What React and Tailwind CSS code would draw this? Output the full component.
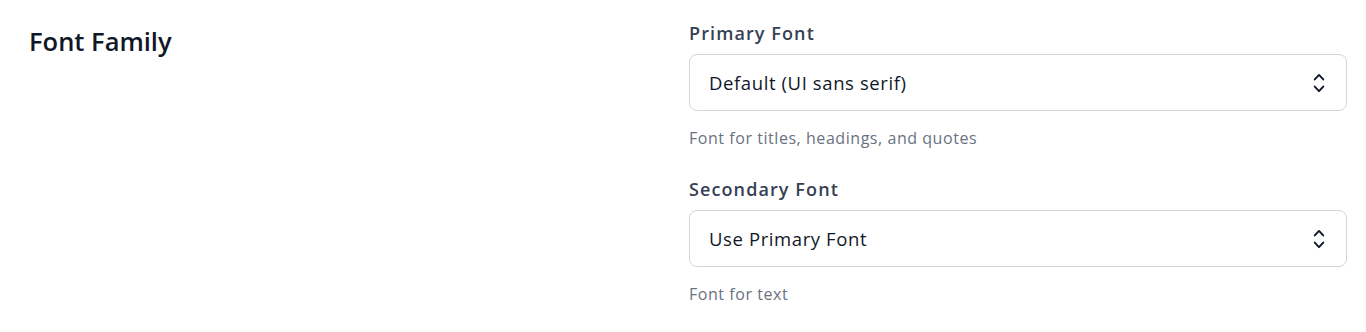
function ChevronUpDown() {
  return (
    <svg viewBox="0 0 20 20" fill="currentColor" className="w-[26px] h-[26px] text-gray-900">
      <path
        fillRule="evenodd"
        d="M10 3a.75.75 0 01.55.24l3.25 3.5a.75.75 0 11-1.1 1.02L10 4.852 7.3 7.76a.75.75 0 01-1.1-1.02l3.25-3.5A.75.75 0 0110 3zm-3.76 9.2a.75.75 0 011.06.04l2.7 2.908 2.7-2.908a.75.75 0 111.1 1.02l-3.25 3.5a.75.75 0 01-1.1 0l-3.25-3.5a.75.75 0 01.04-1.06z"
        clipRule="evenodd"
      />
    </svg>
  );
}

function FontSelect({ label, value, help }) {
  return (
    <div className="flex flex-col">
      <label className="text-[18px] leading-[24px] tracking-[1.1px] font-semibold text-gray-700">{label}</label>
      <div className="mt-[9px] h-[57px] rounded-[8px] border border-gray-300 bg-white flex items-center justify-between pl-[19px] pr-[14px]">
        <span className="text-[18.5px] tracking-[0.6px] text-gray-900">{value}</span>
        <ChevronUpDown />
      </div>
      <p className="mt-[17px] text-[16px] leading-[20px] tracking-[0.55px] text-gray-500">{help}</p>
    </div>
  );
}

export default function App() {
  return (
    <div className="bg-white w-[1366px] h-[332px] flex pl-[29px] pt-[21px] font-['Open_Sans',sans-serif]">
      <h2 className="w-[660px] shrink-0 text-[25.5px] leading-[40px] font-semibold text-gray-900">Font Family</h2>
      <div className="w-[658px] flex flex-col gap-[29px]">
        <FontSelect label="Primary Font" value="Default (UI sans serif)" help="Font for titles, headings, and quotes" />
        <FontSelect label="Secondary Font" value="Use Primary Font" help="Font for text" />
      </div>
    </div>
  );
}
